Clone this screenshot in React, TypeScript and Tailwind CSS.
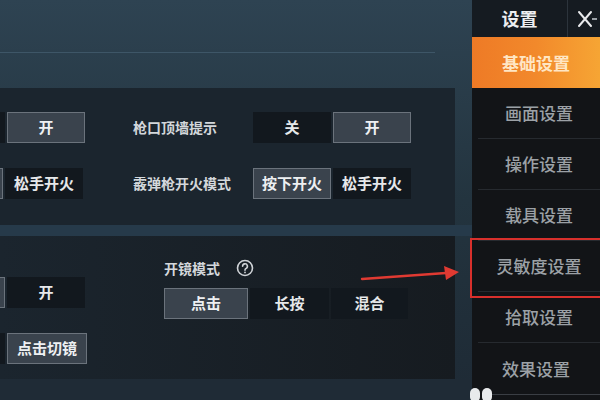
import React from 'react';

const font = { fontFamily: '"Noto Sans CJK SC", "Noto Sans", sans-serif' };

function Btn({ label, on, w = 'w-[78px]' }: { label: string; on?: boolean; w?: string }) {
    return (
        <div
            className={`${w} h-[31px] shrink-0 flex items-center justify-center text-[15px] font-bold ${
                on ? 'bg-[#3a434d] border border-[#6b737c] text-[#eef0f2]' : 'bg-[#12181e] text-[#e6e8ea]'
            }`}
        >
            {label}
        </div>
    );
}

function Segment({ items, active }: { items: string[]; active: number }) {
    return (
        <div className="flex gap-[2px]">
            {items.map((t, i) => (
                <Btn key={i} label={t} on={i === active} />
            ))}
        </div>
    );
}

const menu = ['画面设置', '操作设置', '载具设置', '灵敏度设置', '拾取设置', '效果设置'];

export default function App() {
    return (
        <div className="relative w-[600px] h-[400px] overflow-hidden flex bg-[#1b2631]" style={font}>
            {/* Main area */}
            <div className="w-[472px] shrink-0 flex flex-col bg-gradient-to-b from-[#2e4352] via-[#23343f] to-[#1e2a35]">
                {/* Top strip */}
                <div className="h-[88px] shrink-0 flex flex-col">
                    <div className="h-[52px]" />
                    <div className="h-px w-[435px] bg-[#3e5667]" />
                </div>

                {/* Panel 1 */}
                <div className="h-[137px] shrink-0 mr-[17px] bg-[#1b252e] pt-[24px] flex flex-col gap-[25px] overflow-hidden">
                    <div className="flex items-center">
                        {/* left column, cut off by the screen edge */}
                        <div className="ml-[-73px]">
                            <Segment items={['', '开']} active={1} />
                        </div>
                        <div className="ml-[48px] w-[120px] text-[14px] text-[#d3d7db] font-semibold">枪口顶墙提示</div>
                        <Segment items={['关', '开']} active={1} />
                    </div>
                    <div className="flex items-center">
                        <div className="ml-[-75px]">
                            <Segment items={['', '松手开火']} active={0} />
                        </div>
                        <div className="ml-[50px] w-[120px] text-[14px] text-[#d3d7db] font-semibold">霰弹枪开火模式</div>
                        <Segment items={['按下开火', '松手开火']} active={0} />
                    </div>
                </div>

                {/* Divider strip */}
                <div className="h-[11px] shrink-0 bg-[#263a4a]" />

                {/* Panel 2 */}
                <div className="h-[143px] shrink-0 mr-[17px] bg-gradient-to-r from-[#1b252e] to-[#161b20] flex overflow-hidden">
                    <div className="ml-[-73px] pt-[41px] flex flex-col gap-[25px]">
                        <Segment items={['', '开']} active={0} />
                        <div className="flex gap-[2px]">
                            <Btn label="" />
                            <Btn label="点击切镜" on w="w-[80px]" />
                        </div>
                    </div>
                    <div className="ml-[77px] pt-[24px] flex flex-col">
                        <div className="h-[16px] flex items-center gap-[16px] text-[14px] text-[#d3d7db] font-semibold">
                            开镜模式
                            <svg width="18" height="18" viewBox="0 0 18 18" fill="none">
                                <circle cx="9" cy="9" r="7.5" stroke="#cfd3d7" strokeWidth="1.6" />
                                <path d="M6.6 7.2a2.4 2.4 0 1 1 3.4 2.2c-.7.3-1 .8-1 1.5v.4" stroke="#cfd3d7" strokeWidth="1.6" strokeLinecap="round" />
                                <circle cx="9" cy="13.4" r="0.9" fill="#cfd3d7" />
                            </svg>
                        </div>
                        <div className="mt-[12px] flex gap-[2px]">
                            <Btn label="点击" on w="w-[84px]" />
                            <Btn label="长按" w="w-[79px]" />
                            <Btn label="混合" w="w-[77px]" />
                        </div>
                    </div>
                </div>

                {/* Bottom strip */}
                <div className="flex-1 bg-[#1f2b36]" />
            </div>

            {/* Sidebar */}
            <div className="flex-1 flex flex-col bg-[#121417]">
                <div className="h-[37px] shrink-0 flex bg-[#151b21]">
                    <div className="w-[96px] flex items-center justify-center text-[18px] font-bold text-[#eceef0] border-r border-[#2c343c]">
                        设置
                    </div>
                    <div className="flex-1 flex items-center pl-[9px]">
                        <svg width="22" height="18" viewBox="0 0 22 18" fill="none">
                            <path d="M2 2l12 14M14 2L2 16" stroke="#e8eaec" strokeWidth="2" strokeLinecap="round" />
                            <path d="M15 9h5" stroke="#9aa0a6" strokeWidth="2" />
                        </svg>
                    </div>
                </div>
                <div className="h-[51px] shrink-0 flex items-center justify-center bg-gradient-to-r from-[#ee7a26] via-[#f2892b] to-[#f6a534] text-[17px] font-bold text-[#ffe6c4]">
                    基础设置
                </div>
                {menu.map((m, i) => (
                    <div
                        key={m}
                        className={`h-[51px] shrink-0 flex items-center justify-center text-[17px] font-medium text-[#9ca1a6] ${
                            i < menu.length - 1 ? 'border-b border-[#262a2f] ml-[6px]' : ''
                        }`}
                    >
                        {m}
                    </div>
                ))}
            </div>

            {/* Red highlight box */}
            <div className="absolute left-[470px] top-[238px] w-[132px] h-[60px] border-2 border-[#d8302c]" />

            {/* Red arrow */}
            <svg className="absolute left-[360px] top-[262px]" width="102" height="24" viewBox="0 0 102 24">
                <path d="M2 17 L86 11" stroke="#e03a32" strokeWidth="2.4" strokeLinecap="round" />
                <path d="M84 4 L99 10 L86 18 Z" fill="#e03a32" />
            </svg>

            {/* Bottom dots */}
            <div className="absolute left-[470px] top-[388px] flex gap-[2px]">
                <div className="w-[10px] h-[14px] rounded-full bg-[#e8eaec]" />
                <div className="w-[10px] h-[14px] rounded-full bg-[#e8eaec]" />
            </div>
            <div className="absolute left-[492px] top-[394px] w-[108px] h-px bg-[#3a3e44]" />
        </div>
    );
}
